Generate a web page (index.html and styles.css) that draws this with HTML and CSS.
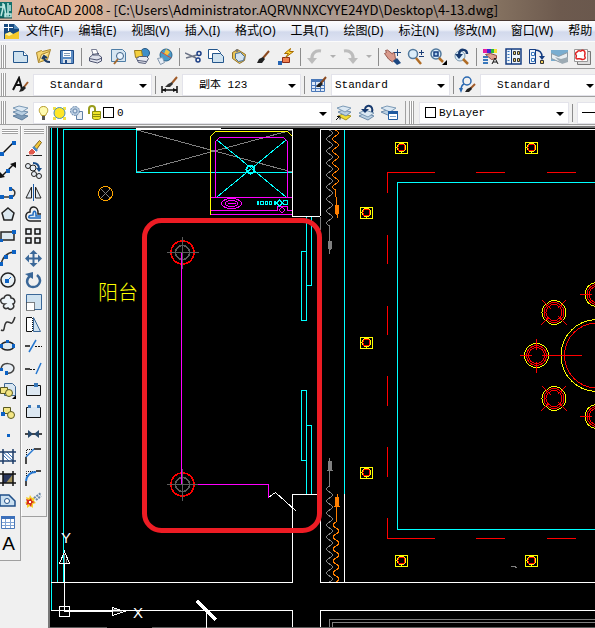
FILE: index.html
```html
<!DOCTYPE html>
<html lang="zh-CN">
<head>
    <meta charset="UTF-8">
    <meta name="viewport" content="width=device-width, initial-scale=1.0">
    <title>AutoCAD 2008</title>
    <link rel="stylesheet" href="styles.css">
</head>
<body>
<header class="titlebar">
    <svg class="app-icon" width="12" height="17" viewBox="0 0 12 17"><path fill="#12706c" d="M0 0h12v16H0z"/><path fill="none" stroke="#bfe8e2" stroke-width="1.500" d="M0 5h3v-4M1 14l3-12 2 12M8 1v13M10 3v6M5 12h6v3H5z"/><path fill="none" stroke="#0a4744" d="M0 16h12"/></svg>
    <h1>AutoCAD 2008 - [C:\Users\Administrator.AQRVNNXCYYE24YD\Desktop\4-13.dwg]</h1>
</header>

<nav class="menubar">
    <svg class="doc-icon" width="16" height="17" viewBox="0 0 16 17"><path fill="#184a80" d="M0 1h10l5 5v10H0z"/><path fill="#4c86b8" d="M10 1l5 5h-5z"/><path fill="#f5c92c" d="M1 11l5-2 3 2 6-3v8H1z"/><path fill="#fff3a0" d="M1 11l5-2 3 2-4 2z"/><path stroke="#fff" d="M4.500 0v8M0 4.500h9"/></svg>
    <button>文件(F)</button>
    <button>编辑(E)</button>
    <button>视图(V)</button>
    <button>插入(I)</button>
    <button>格式(O)</button>
    <button>工具(T)</button>
    <button>绘图(D)</button>
    <button>标注(N)</button>
    <button>修改(M)</button>
    <button>窗口(W)</button>
    <button>帮助</button>
</nav>

<!-- Standard toolbar -->
<div class="toolbar">
    <span class="grip"></span>
    <button class="tool" aria-label="New"><svg viewBox="0 0 17 17"><path fill="#cfe2ef" stroke="#23568c" d="M1.500 3.500h10l4 4v7h-14z"/><path fill="#fff" stroke="#23568c" d="M11.500 3.500v4h4"/></svg></button>
    <button class="tool" aria-label="Open"><svg viewBox="0 0 17 17"><path fill="#f6d66f" stroke="#a8842c" d="M1.500 4.500l5-2 1 1 8-2-3 10-9 3z"/><path fill="#ffeeb0" stroke="#a8842c" d="M3.500 14.500l3-8 8-3"/><path fill="none" stroke="#1d3c66" stroke-width="2" d="M9 9c0 4 2 5 6 5M7 11l2-3 3 2"/></svg></button>
    <button class="tool" aria-label="Save"><svg viewBox="0 0 17 17"><path fill="#5b8cc4" stroke="#1f4b86" d="M2.500 2.500h13v13h-13z"/><path fill="#fff" d="M5 3h8v6H5z"/><path fill="#d8e0e8" d="M5 11h8v4H5z"/><path stroke="#7f98b5" d="M6 5.500h6M6 7.500h6"/><path fill="#1f4b86" d="M7 12h2v3H7z"/></svg></button>
    <span class="sep"></span>
    <button class="tool" aria-label="Plot"><svg viewBox="0 0 17 17"><path fill="#fff" stroke="#7a7f93" d="M4.500 1.500h5l2 6h-5z"/><path fill="#dfe2ec" stroke="#4d5470" d="M2.500 9.500l3-2.500h6l3 2v4l-4 2-8-2z"/><path fill="none" stroke="#4d5470" d="M2 10.500l8 1.500 5-2M5 6.500l7-1"/></svg></button>
    <button class="tool" aria-label="Plot preview"><svg viewBox="0 0 17 17"><path fill="#d6e6f2" stroke="#4f7ea6" d="M1.500 1.500h11l3 3v9h-14z"/><circle cx="10" cy="8" r="3.500" fill="#eaf5ff" stroke="#3d5f85"/><path stroke="#a4692d" stroke-width="2" d="M8 11l-4 5"/></svg></button>
    <button class="tool" aria-label="Publish"><svg viewBox="0 0 17 17"><circle cx="12" cy="5" r="4.500" fill="#3f8fc9" stroke="#28557f"/><path fill="#f4cf3e" stroke="#9a7a18" d="M1.500 2.500h7l1 6-7 1z"/><path fill="#e8eaf2" stroke="#525a77" d="M3.500 10.500l3-2h7l2 2-3 5-7-1z"/><path stroke="#525a77" d="M5 12.500l8 1"/></svg></button>
    <button class="tool" aria-label="Web publish"><svg viewBox="0 0 17 17"><circle cx="10" cy="7" r="6" fill="#4a9ac8" stroke="#2c6690"/><path fill="#f1c644" d="M10 1l4 3-3 4-3-2z"/><path fill="none" stroke="#ce4c38" d="M5 4l10 6"/><path fill="#e6edf5" stroke="#8497ad" d="M1.500 10.500l5-1 2 5-4 2z"/></svg></button>
    <span class="sep"></span>
    <button class="tool" aria-label="Cut"><svg viewBox="0 0 17 17"><path stroke="#6c7486" stroke-width="1.500" d="M0 5l11 5M1 10l11-3"/><circle cx="14" cy="5.500" r="2" fill="none" stroke="#1c3f86" stroke-width="1.500"/><circle cx="13" cy="12" r="2" fill="none" stroke="#1c3f86" stroke-width="1.500"/></svg></button>
    <button class="tool" aria-label="Copy"><svg viewBox="0 0 17 17"><path fill="#fff" stroke="#23568c" d="M.500 1.500h9l3 3v6h-12z"/><path fill="#cfe2ef" stroke="#23568c" d="M4.500 5.500h8l3 3v6h-11z"/></svg></button>
    <button class="tool" aria-label="Paste"><svg viewBox="0 0 17 17"><path fill="#e9c558" stroke="#91702a" d="M1.500 4.500l5-3 8 5-1 6-5 3-7-5z"/><path fill="#d4e4f2" stroke="#476e98" d="M4.500 5.500l5-1 4 4-1 4-5 1-3-3z"/><circle cx="6" cy="2.500" r="1.500" fill="#777"/></svg></button>
    <button class="tool" aria-label="Match properties"><svg viewBox="0 0 17 17"><path stroke="#8b4a20" stroke-width="2" d="M15 3l-6 7"/><path fill="#222" d="M3 15l2-4 4-2 2 2-3 4z"/></svg></button>
    <button class="tool" aria-label="Block editor"><svg viewBox="0 0 17 17"><path fill="#f08050" stroke="#8b2c18" d="M5.500 9.500h7v5h-7z"/><path fill="#ffd83a" stroke="#a86c00" d="M13.500.500l-6 5h4l-3 4 8-6h-4z"/><path fill="#2464b4" d="M1 13h4v4H1z"/></svg></button>
    <span class="sep"></span>
    <button class="tool" aria-label="Undo"><svg viewBox="0 0 17 17"><path fill="none" stroke="#bcbcbc" stroke-width="3" d="M15 3c-6-1-10 3-9 9"/><path fill="#bcbcbc" d="M1 10h10l-5 6z"/></svg></button>
    <button class="drop" aria-label="Undo list"></button>
    <button class="tool" aria-label="Redo"><svg viewBox="0 0 17 17"><path fill="none" stroke="#bcbcbc" stroke-width="3" d="M2 3c6-1 10 3 9 9"/><path fill="#bcbcbc" d="M6 10h10l-5 6z"/></svg></button>
    <button class="drop" aria-label="Redo list"></button>
    <span class="sep"></span>
    <button class="tool" aria-label="Pan"><svg viewBox="0 0 17 17"><path fill="#d99a8c" stroke="#96594e" d="M.500 5.500l2-1-1-2 2-.500 5 4 1-2 1 1 1 6-3 3-4-3z"/><path fill="#1d4780" d="M9 13l4-3 4 5-4 2z"/><path stroke="#1d4780" d="M13.500 1v7M10 4.500h7"/></svg></button>
    <button class="tool" aria-label="Zoom realtime"><svg viewBox="0 0 17 17"><circle cx="6" cy="6" r="4.500" fill="#dceefa" stroke="#52799d" stroke-width="1.500"/><path stroke="#b06c25" stroke-width="2.500" d="M9 10l5 6"/><path stroke="#1d3f78" d="M12 4.500h5M14.500 2v5M12 8.500h5"/></svg></button>
    <button class="tool" aria-label="Zoom window"><svg viewBox="0 0 17 17"><circle cx="6" cy="6" r="5" fill="#dceefa" stroke="#52799d" stroke-width="1.500"/><path fill="#a9cdec" stroke="#143c80" stroke-width="1.500" d="M4 4h4v4H4z"/><path stroke="#b06c25" stroke-width="2.500" d="M9 10l4 4"/><path fill="#000" d="M17 12v5h-5z"/></svg></button>
    <button class="tool" aria-label="Zoom previous"><svg viewBox="0 0 17 17"><circle cx="7" cy="8" r="5" fill="#dceefa" stroke="#7996ad"/><path fill="none" stroke="#16396e" stroke-width="2.500" d="M14 6c0-5-7-6-8 0"/><path fill="#16396e" d="M2 6h8l-4 5z"/><path stroke="#b06c25" stroke-width="2.500" d="M10 11l5 5"/></svg></button>
    <span class="sep"></span>
    <button class="tool" aria-label="Properties"><svg viewBox="0 0 17 17"><path fill="#e81ca0" d="M1 1h4v4H1z"/><path fill="#4028d8" d="M5 1h4v4H5z"/><path fill="#28b83c" d="M9 1h3v4H9z"/><path fill="#f8e030" d="M12 1h3v4h-3z"/><path fill="#e0a090" stroke="#8c4a40" d="M3.500 6.500l5-1 6 2v3l-5 1z"/><path stroke="#3a78bc" stroke-width="2" d="M1 9h5M1 12h5M1 15h5"/><path fill="none" stroke="#111" d="M10 16l3-6 3 6M11 14h4"/></svg></button>
    <button class="tool" aria-label="DesignCenter"><svg viewBox="0 0 17 17"><path fill="#eef4fa" stroke="#143c80" stroke-width="1.500" d="M1 1h15v15H1z"/><path stroke="#143c80" d="M6.500 1v15"/><path fill="#e8c860" stroke="#333" d="M8.500 3.500h2v3h-2zM12.500 3.500h2v3h-2zM8.500 10.500h2v3h-2zM12.500 10.500h2v3h-2z"/><path stroke="#3a78bc" stroke-dasharray="1 2" stroke-width="2" d="M3.500 3v11"/></svg></button>
    <button class="tool" aria-label="Tool palettes"><svg viewBox="0 0 17 17"><path fill="#eef4fa" stroke="#143c80" d="M1.500 1.500h6v14h-6z"/><path fill="#fff" stroke="#3a78bc" d="M3.500 4.500h3v3h-3zM3.500 10.500h3v3h-3z"/><path fill="none" stroke="#143c80" stroke-width="1.500" d="M7 2c5 0 7 2 7 7"/><path fill="#143c80" d="M11 8h6l-3 4z"/><path fill="#f0cc5a" stroke="#333" d="M12.500 12.500h3v3h-3z"/></svg></button>
    <button class="tool" aria-label="Sheet set manager"><svg viewBox="0 0 17 17"><path fill="#79add0" d="M0 2h17v11H0z"/><path fill="#e8eef2" stroke="#8e9ba5" d="M.500 5.500l7 3 9-4v5l-7 5-9-4z"/><path fill="#9dabb4" d="M4 9l6 2 7-2v5l-6 2z"/></svg></button>
    <button class="tool" aria-label="Markup set manager"><svg viewBox="0 0 17 17"><path fill="#ddd" stroke="#777" d="M3.500 3.500h13v13h-13z"/><path fill="#fff" stroke="#999" d="M.500 1.500h13v12h-13z"/><path fill="none" stroke="#e02020" stroke-width="1.500" d="M3 4c2-3 3 0 4-1s4-1 4 2-1 2 0 4-2 3-4 2-5 1-5-1 1-2 0-3 0-3 1-3z"/></svg></button>
</div>

<!-- Styles toolbar -->
<div class="toolbar">
    <span class="grip"></span>
    <label class="tool" for="textStyle"><svg viewBox="0 0 17 17"><path fill="none" stroke="#111" stroke-width="2" d="M1 14l6-12 3 11M3 9h6"/><path stroke="#a05a28" stroke-width="2" d="M16 6l-4 5"/><path fill="#222" d="M7 16l2-4 3-2 2 2-3 3z"/></svg></label>
    <div class="combo indent"><select id="textStyle"><option>Standard</option></select></div>
    <span class="sep"></span>
    <label class="tool" for="dimStyle"><svg viewBox="0 0 17 17"><path stroke="#111" stroke-width="1.500" d="M1 10v7M16 10v7M1 14h15"/><path fill="#111" d="M1 14l4-2v4zM16 14l-4-2v4z"/><path stroke="#a05a28" stroke-width="2" d="M16 1l-5 6"/><path fill="#333" d="M4 11l3-3 4-2 1 2-3 3z"/></svg></label>
    <div class="combo indent"><select id="dimStyle"><option>副本 123</option></select></div>
    <span class="sep"></span>
    <label class="tool" for="tableStyle"><svg viewBox="0 0 17 17"><path fill="#dfeaf8" stroke="#4a78b8" d="M1.500 3.500h13v12h-13z"/><path fill="#4a78b8" d="M1 3h14v3H1z"/><path stroke="#4a78b8" d="M1 9.500h14M1 12.500h14M5.500 4v12M10.500 4v12"/><path stroke="#8b4a20" stroke-width="2" d="M16 1l-5 6"/><path fill="#222" d="M6 11l2-3 3-2 2 2-3 3z"/></svg></label>
    <div class="combo"><select id="tableStyle"><option>Standard</option></select></div>
    <span class="sep"></span>
    <label class="tool" for="leaderStyle"><svg viewBox="0 0 17 17"><circle cx="8" cy="5" r="4" fill="none" stroke="#2a68b0" stroke-width="1.500"/><path fill="none" stroke="#2a68b0" stroke-width="1.500" d="M5 8c-2 1-3 3-3 6"/><path fill="#2a68b0" d="M0 12h4l-2 5z"/><path stroke="#a05a28" stroke-width="2" d="M16 8l-4 4"/><path fill="#222" d="M6 16l2-3 4-2 1 2-3 3z"/></svg></label>
    <div class="combo indent"><select id="leaderStyle"><option>Standard</option></select></div>
</div>

<!-- Layers and properties toolbars -->
<div class="toolbar">
    <span class="grip"></span>
    <button class="tool" aria-label="Layer properties"><svg viewBox="0 0 17 17"><path fill="#7f9cb8" stroke="#5d7d9d" d="M1 12l6-2 9 2-6 4z"/><path fill="#b9cfe2" stroke="#6d8cab" d="M1 8l6-2 9 2-6 4z"/><path fill="#dbe8f3" stroke="#7c9ab6" d="M1 4l6-2 9 2-6 4z"/></svg></button>
    <div class="combo layer-combo">
        <svg width="64" height="16" viewBox="0 0 64 16">
            <path fill="#fffbb0" stroke="#b59a2a" d="M5.500 1.500c5 0 5 5 3 7l-1 2h-4l-1-2c-2-2-2-7 3-7z"/><path stroke="#555" stroke-width="2" d="M4 12h3M4 14h3"/>
            <path fill="#f2e24a" d="M15 2h3v3h-3zM25 2h3v3h-3zM15 12h3v3h-3zM25 12h3v3h-3z"/><circle cx="21.500" cy="8" r="5.500" fill="#ffe628" stroke="#4b8db4"/>
            <path fill="#e8eef4" stroke="#5f7fa5" d="M38.500 6.500h6v8h-6z"/><circle cx="37" cy="6" r="4.500" fill="#b5c9de" stroke="#6787ac" stroke-dasharray="2 1"/><circle cx="37" cy="6" r="2" fill="#dde8f2" stroke="#6787ac"/>
            <path fill="none" stroke="#999c1c" stroke-width="2" d="M51 9V4c0-4 6-4 6 0v2"/><path fill="#f0e428" stroke="#8a8c10" d="M54.500 6.500h8v7l-2 1h-4l-2-1z"/><path stroke="#8a8c10" d="M55 9.500h8M55 11.500h8"/>
        </svg>
        <span class="swatch"></span>
        <select aria-label="Layer"><option>0</option></select>
    </div>
    <button class="tool" aria-label="Make object's layer current"><svg viewBox="0 0 17 17"><path fill="#f2dc34" stroke="#a8941c" d="M3 12l5-2 8 2-5 4z"/><path fill="#b9cfe2" stroke="#6d8cab" d="M3 8l5-2 8 2-5 4z"/><path fill="#dbe8f3" stroke="#7c9ab6" d="M2 4l6-2 8 2-6 4z"/><path fill="none" stroke="#111" d="M1 16l4-4M2 12.500h3v3"/></svg></button>
    <button class="tool" aria-label="Layer previous"><svg viewBox="0 0 17 17"><path fill="#b9cfe2" stroke="#6d8cab" d="M1 12l6-3 9 3-6 4z"/><path fill="#dbe8f3" stroke="#7c9ab6" d="M1 9l6-3 9 3-6 4z"/><path fill="none" stroke="#16396e" stroke-width="2" d="M14 8c2-7-6-8-7-3"/><path fill="#16396e" d="M3 5h8l-4 4z"/></svg></button>
    <button class="tool" aria-label="Layer states"><svg viewBox="0 0 17 17"><path fill="#b9cfe2" stroke="#6d8cab" d="M0 8l6-2 9 2-6 4z"/><path fill="#dbe8f3" stroke="#7c9ab6" d="M0 4l6-2 9 2-6 4z"/><path fill="#fff" stroke="#1f5aa0" d="M7.500 7.500h9v8h-9z"/><path fill="#1f5aa0" d="M7 7h10v3H7z"/><path stroke="#7da3cc" d="M9 12.500h6"/></svg></button>
    <span class="toolbar-end"></span>
    <span class="grip"></span>
    <div class="combo color-combo">
        <span class="swatch"></span>
        <select aria-label="Color"><option>ByLayer</option></select>
    </div>
    <span class="sep"></span>
    <button class="combo line-combo" aria-label="Linetype"><span class="line-sample"></span></button>
</div>

<main class="workspace">
    <!-- Draw -->
    <div class="palette draw">
        <span class="grip"></span>
        <button class="tool" aria-label="Line"><svg viewBox="0 0 17 17"><path stroke="#111" stroke-width="1.500" d="M2 14L13 3"/><path fill="#0c62c4" d="M0 12h4v4H0zM12 1h4v4h-4z"/></svg></button>
        <button class="tool" aria-label="Construction line"><svg viewBox="0 0 17 17"><path stroke="#111" stroke-width="1.500" d="M1 15L15 1"/><path fill="#111" d="M16 0v6l-6-4zM0 16v-6l5 5z"/><path fill="#0c62c4" d="M6 7h4v4H6z"/></svg></button>
        <button class="tool" aria-label="Polyline"><svg viewBox="0 0 17 17"><path fill="none" stroke="#333" stroke-width="1.500" d="M1 13h9c6 0 7-8 0-8"/><path fill="#0c62c4" d="M0 11h4v4H0zM9 11h4v4H9zM9 3h3v4H9z"/></svg></button>
        <button class="tool" aria-label="Polygon"><svg viewBox="0 0 17 17"><path fill="#dce8f0" stroke="#222" stroke-width="1.500" d="M8 2l6 5-2 7H4L2 7z"/></svg></button>
        <button class="tool" aria-label="Rectangle"><svg viewBox="0 0 17 17"><path fill="#dce8f0" stroke="#222" stroke-width="1.500" d="M1 4h13v8H1z"/><path fill="#0c62c4" d="M0 11h3v3H0zM12 2h4v4h-4z"/></svg></button>
        <button class="tool" aria-label="Arc"><svg viewBox="0 0 17 17"><path fill="none" stroke="#333" stroke-width="1.500" d="M1 15C2 8 6 3 14 2"/><path fill="#0c62c4" d="M0 12h3v4H0zM4 5h4v4H4zM12 0h4v4h-4z"/></svg></button>
        <button class="tool" aria-label="Circle"><svg viewBox="0 0 17 17"><circle cx="8" cy="8" r="7" fill="#e8f0f4" stroke="#222" stroke-width="1.500"/><path stroke="#0c62c4" d="M7 9l4-4"/><path fill="#0c62c4" d="M5 7h4v4H5z"/></svg></button>
        <button class="tool" aria-label="Revision cloud"><svg viewBox="0 0 17 17"><path fill="#eef4f8" stroke="#333" stroke-width="1.500" d="M4 4c1-4 7-4 7 0 4 0 5 5 2 6 3 4-3 7-5 4-4 2-6-2-3-4-5 0-6-6-1-6z"/></svg></button>
        <button class="tool" aria-label="Spline"><svg viewBox="0 0 17 17"><path fill="none" stroke="#333" stroke-width="1.500" d="M1 14C6 17 3 7 7 6s4 6 8-5"/></svg></button>
        <button class="tool" aria-label="Ellipse"><svg viewBox="0 0 17 17"><ellipse cx="7.500" cy="8" rx="6.500" ry="4" fill="#dce8f0" stroke="#222" stroke-width="1.500"/><path fill="#0c62c4" d="M0 6h3v4H0zM12 6h3v4h-3zM6 2h3v3H6z"/></svg></button>
        <button class="tool" aria-label="Ellipse arc"><svg viewBox="0 0 17 17"><path fill="#e8eef4" stroke="#444" stroke-width="1.500" d="M1 9C2 1 14 3 14 8c0 4-4 6-8 5"/><path fill="#0c62c4" d="M0 8h3v3H0zM5 11h3v4H5z"/></svg></button>
        <button class="tool" aria-label="Insert block"><svg viewBox="0 0 17 17"><path fill="#d8e6f2" stroke="#3c6694" d="M4.500 1.500h8l3 3v9h-11z"/><path fill="#f4e684" stroke="#5a5a20" d="M.500 5.500h7v6h-7z"/><circle cx="9" cy="11" r="3.500" fill="#f4e684" stroke="#5a5a20"/><path fill="#000" d="M16 13v4h-4z"/></svg></button>
        <button class="tool" aria-label="Make block"><svg viewBox="0 0 17 17"><path fill="#f4e684" stroke="#5a5a20" d="M3.500 3.500h7v6h-7z"/><circle cx="11" cy="11" r="3.500" fill="#f4e684" stroke="#5a5a20"/><path fill="#0c62c4" d="M1 8h4v4H1z"/></svg></button>
        <button class="tool" aria-label="Point"><svg viewBox="0 0 17 17"><path fill="#0c62c4" d="M7 8h3v3H7z"/></svg></button>
        <button class="tool" aria-label="Hatch"><svg viewBox="0 0 17 17"><path fill="#fff" d="M3 4h10v9H3z"/><path stroke="#3c74b8" d="M3 7l6 6M3 4l10 9M7 4l6 6"/><path stroke="#1c3c68" stroke-width="1.500" d="M0 4h16M0 13h16M3 1v15M13 1v15"/></svg></button>
        <button class="tool" aria-label="Gradient"><svg viewBox="0 0 17 17"><path fill="#28365c" d="M3 4h10v9H3z"/><path fill="#a3935c" d="M13 4v9H6z"/><path stroke="#111" stroke-width="1.500" d="M0 4h16M0 13h16M3 1v15M13 1v15"/></svg></button>
        <button class="tool" aria-label="Region"><svg viewBox="0 0 17 17"><path fill="#c9dff0" stroke="#1f4f88" stroke-width="1.500" d="M0 3h9l6 6v5H0z"/><circle cx="7" cy="9" r="2.500" fill="#fff" stroke="#1f4f88"/></svg></button>
        <button class="tool" aria-label="Table"><svg viewBox="0 0 17 17"><path fill="#fff" stroke="#4a78b8" d="M1.500 2.500h13v12h-13z"/><path fill="#3c70ba" d="M1 2h14v3H1z"/><path stroke="#7fa3d4" d="M2 8.500h12M2 11.500h12M5.500 5v9M10.500 5v9"/></svg></button>
        <button class="tool mtext">A</button>
    </div>

    <!-- Modify -->
    <div class="palette modify">
        <span class="grip"></span>
        <button class="tool" aria-label="Erase"><svg viewBox="0 0 17 17"><path stroke="#222" d="M1 15.500h16"/><path fill="#f0c83c" stroke="#80621c" d="M8.500 7.500l6-7 2 2-5 7z"/><path fill="#4a86c0" d="M7 8l2-2 4 4-2 2z"/><path fill="#e0584c" stroke="#fff" d="M3 12l4-4 4 4-3 3H4z"/></svg></button>
        <button class="tool" aria-label="Copy object"><svg viewBox="0 0 17 17"><g fill="#e8eef4" stroke="#222"><circle cx="3" cy="4" r="2.500"/><circle cx="8" cy="6" r="3"/><circle cx="9" cy="12" r="2.500"/><circle cx="14" cy="14" r="2.500"/></g><path fill="none" stroke="#174b88" stroke-width="2" d="M8 1c4 0 6 2 6 6"/><path fill="#174b88" d="M11 6h6l-3 4z"/></svg></button>
        <button class="tool" aria-label="Mirror"><svg viewBox="0 0 17 17"><path fill="#e0e8f0" stroke="#222" d="M6.500 3v11H1zM10.500 3v11H16z"/><path stroke="#1c5ca8" d="M8.500 0v17"/></svg></button>
        <button class="tool" aria-label="Offset"><svg viewBox="0 0 17 17"><path fill="none" stroke="#222" stroke-width="1.500" d="M16 8h-3c1-9-9-9-8-2-6 0-5 9 0 9h11"/><path fill="#dce8f2" stroke="#1d69c0" stroke-width="1.500" d="M16 12H5c-2 0-2-3 3-3 0-5 3-5 3 0v1h5"/></svg></button>
        <button class="tool" aria-label="Array"><svg viewBox="0 0 17 17"><path fill="#e8eef4" stroke="#111" stroke-width="1.500" d="M1 1h5v5H1zM10 1h5v5h-5zM1 10h5v5H1zM10 10h5v5h-5z"/></svg></button>
        <button class="tool" aria-label="Move"><svg viewBox="0 0 17 17"><path stroke="#3a6798" stroke-width="2" d="M8.500 2v13M2 8.500h13"/><path fill="#3a6798" d="M8.500 0l4 4h-8zM8.500 17l4-4h-8zM0 8.500l4-4v8zM17 8.500l-4-4v8z"/></svg></button>
        <button class="tool" aria-label="Rotate"><svg viewBox="0 0 17 17"><path fill="none" stroke="#3a6798" stroke-width="2.500" d="M12 3c6 5 2 12-4 12S0 8 5 4"/><path fill="#3a6798" d="M0 2l8-2v7z"/></svg></button>
        <button class="tool" aria-label="Scale"><svg viewBox="0 0 17 17"><path fill="#cfe2f0" stroke="#3a6798" d="M1.500.500h15v15h-15z"/><path fill="#fff" stroke="#111" stroke-dasharray="1 1" d="M1.500 8.500h8v8h-8z"/></svg></button>
        <button class="tool" aria-label="Stretch"><svg viewBox="0 0 17 17"><path fill="#cfe2f0" stroke="#3a6798" d="M8.500 1.500l7 14h-7z"/><path fill="#fff" stroke="#111" d="M1.500 1.500h6v14h-6z"/><path stroke="#fff" stroke-dasharray="1 1" d="M7.500 1v15"/></svg></button>
        <button class="tool" aria-label="Trim"><svg viewBox="0 0 17 17"><path stroke="#111" stroke-width="1.500" d="M0 8h5"/><path stroke="#111" stroke-dasharray="2 1" d="M10 8.500h7"/><path stroke="#2577d0" stroke-width="1.500" d="M4 14l7-12"/></svg></button>
        <button class="tool" aria-label="Extend"><svg viewBox="0 0 17 17"><path stroke="#111" stroke-width="1.500" d="M0 9h5"/><path stroke="#111" stroke-dasharray="2 1" d="M5 9.500h6"/><path stroke="#2577d0" stroke-width="1.500" d="M11 14l5-11"/></svg></button>
        <button class="tool" aria-label="Break at point"><svg viewBox="0 0 17 17"><path fill="#dde8f2" stroke="#111" d="M1.500 3.500h14v10h-14z"/><path fill="#3a78b8" d="M9 1h4v4H9z"/></svg></button>
        <button class="tool" aria-label="Break"><svg viewBox="0 0 17 17"><path fill="#dde8f2" d="M1 3h15v11H1z"/><path fill="none" stroke="#111" d="M4 3.500H1.500v10h14v-10H13"/><path fill="#3a78b8" d="M3 1h3v3H3zM12 1h3v3h-3z"/></svg></button>
        <button class="tool" aria-label="Join"><svg viewBox="0 0 17 17"><path stroke="#111" stroke-width="1.500" d="M0 8h17"/><path fill="#27496c" d="M3 4l5 4-5 4zM14 4L9 8l5 4z"/></svg></button>
        <button class="tool" aria-label="Chamfer"><svg viewBox="0 0 17 17"><path fill="none" stroke="#111" stroke-dasharray="1 1" d="M1.500 9V1.500H9"/><path fill="none" stroke="#111" stroke-width="1.500" d="M1 16V9M9 1h7"/><path stroke="#2577d0" stroke-width="1.500" d="M1 9l8-8"/></svg></button>
        <button class="tool" aria-label="Fillet"><svg viewBox="0 0 17 17"><path fill="none" stroke="#111" stroke-dasharray="1 1" d="M1.500 10V1.500H10"/><path fill="none" stroke="#111" stroke-width="1.500" d="M1 16v-5M11 1h5"/><path fill="none" stroke="#2577d0" stroke-width="2" d="M1 11C2 5 5 2 11 2"/></svg></button>
        <button class="tool" aria-label="Explode"><svg viewBox="0 0 17 17"><path fill="#f6cf2c" d="M1 5l3 1 1-3 2 3 3-1-1 4 2 2-3 1v4l-3-2-3 2v-4L0 11l2-2z"/><path fill="#d62a1c" d="M1 7l3 1 2-2 1 3 3 1-3 1-1 4-2-3-3 1 1-3z"/><path fill="#fff" d="M4 9h2v2H4z"/><path stroke="#6d89a8" stroke-width="2" stroke-dasharray="2 1" d="M9 6l7-5M11 8l5-4"/></svg></button>
    </div>

    <!-- Drawing area -->
    <section class="canvas">
        <svg class="drawing" aria-label="Model space">
            <defs>
                <symbol id="spot" overflow="visible">
                    <path class="yellow" d="M-6 -5H6V6H-6z"/>
                    <circle class="yellow" r="4.500"/>
                    <circle class="red" r="3.500"/>
                </symbol>
                <g id="chair">
                    <circle class="yellow" r="12"/>
                    <circle class="red" r="10"/>
                    <circle class="red" r="8"/>
                    <path class="red" d="M-17 0H-5M5 0H17M0 -17V-6M0 6V17"/>
                </g>
                <g id="lamp">
                    <circle class="red ring" r="11.500"/>
                    <path class="dim" d="M-16 0H16M0 -16V16"/>
                    <circle class="dim ring" r="7"/>
                </g>
            </defs>

            <g class="plan" transform="translate(-50 -128)">
                <!-- walls -->
                <path class="cyan" d="M51.500 128V610M57.500 128V582M63.500 582V129.500H136.500V172.500H292"/>
                <path class="white" d="M136 128.500H221M136 129.500H292.500V216.500H320M320.500 216V129.500H595"/>
                <path class="gray" d="M320.500 217V230"/>
                <path class="white" d="M51 582.500H292.500V494.500H320.500V582.500H595M344.500 494V582"/>
                <path class="white" d="M51 610.500H292.500V628M320.500 628V610.500H595"/>
                <path class="gray" d="M329.500 628V619.500H595M332.500 628V622.500H595"/>
                <path class="dim" d="M50 627.500H107M152 627.500H595"/>
                <path class="cyan" d="M344.500 130V494"/>

                <!-- sink and stove -->
                <path class="gray" d="M137 130L292 172M137 172L292 130"/>
                <path class="yellow" d="M210.500 215V136.500L215.500 131.500H287.500L292 136"/>
                <path class="magenta" d="M215.500 197V141.500L219.500 137.500H283.500L287.500 141.500V197M211 197.500H292M211 214.500H292M211 210.500H277.500V206.500H287.500V210.500H292M282 207l3 3-3 3-3-3z"/>
                <path class="cyan" d="M217 140L286 197M286 140L217 197"/>
                <circle class="cyan heavy" cx="250.500" cy="169.500" r="4"/>
                <ellipse class="magenta" cx="231.500" cy="203.500" rx="10" ry="5"/>
                <ellipse class="magenta" cx="231.500" cy="203.500" rx="6" ry="3"/>
                <path class="magenta" d="M228 203.500H236"/>
                <path class="cyan" d="M257.500 201v4M258.500 201v4M260.500 201.500h3v3h-3zM265.500 201.500h2v3h-2zM269.500 201.500h2v3h-2zM274.500 201v4M275.500 201v4M279.500 200l3 3-3 3-3-3z"/>
                <circle class="cyan" cx="285.500" cy="202.500" r="2.500"/>

                <!-- sliding doors -->
                <path class="cyan" d="M306.500 217V320.500H301.500V251.500H306M311.500 217V285.500H306"/>
                <path class="cyan" d="M306.500 494V390.500H301.500V460.500H306M306 425.500H311.500V494"/>

                <!-- curtains -->
                <path class="gray" d="M329.500 130q6 3 0 6t0 6t0 6t0 6t0 6t0 6t0 6t0 6t0 6t0 6t0 6t0 6t0 6t0 6t0 6t0 6V254"/>
                <path class="gray fill" d="M328 241h4l-1 8h-2z"/>
                <path class="orange" d="M335.500 130q6 3 0 6t0 6t0 6t0 6t0 6t0 6t0 6t0 6t0 6t0 6L337.500 218"/>
                <path class="orange fill" d="M335 205h4l-1 9h-2z"/>
                <path class="gray" d="M329.500 582q6 -3 0 -6t0 -6t0 -6t0 -6t0 -6t0 -6t0 -6t0 -6t0 -6t0 -6t0 -6t0 -6t0 -6t0 -6t0 -6t0 -6V458"/>
                <path class="gray fill" d="M328 470h4l-1 -9h-2z"/>
                <path class="orange" d="M336 582q6 -3 0 -6t0 -6t0 -6t0 -6t0 -6t0 -6t0 -6t0 -6t0 -6t0 -6L337.500 494"/>
                <path class="orange fill" d="M335 506h4l-1 -9h-2z"/>

                <!-- balcony -->
                <circle class="amber" cx="105.500" cy="193.500" r="7"/>
                <path class="gray" d="M101 189L110 198M110 189L101 198"/>
                <text class="room" x="98" y="300">阳台</text>
                <use href="#lamp" x="182.500" y="252.500"/>
                <use href="#lamp" x="182.500" y="484.500"/>
                <path class="magenta" d="M181.500 253V484M198 484.500H268.500V498"/>
                <path class="white" d="M269 497L275.500 492.500L296 511"/>
                <rect class="marker" x="144.500" y="220.500" width="175" height="310" rx="17"/>

                <!-- dining room -->
                <path class="red" d="M387.500 193V172.500H435M476 172.500H505M547 172.500H576M387.500 235V264M387.500 306V335M387.500 376V406M387.500 447V477M387.500 518V538.500H435M476 538.500H505M547 538.500H576"/>
                <path class="cyan" d="M595 182.500H397.500V529.500H595"/>
                <use href="#spot" x="401.500" y="147.500"/>
                <use href="#spot" x="531.500" y="147.500"/>
                <use href="#spot" x="366.500" y="212.500"/>
                <use href="#spot" x="366.500" y="342.500"/>
                <use href="#spot" x="366.500" y="472.500"/>
                <use href="#spot" x="401.500" y="560.500"/>
                <use href="#spot" x="531.500" y="560.500"/>
                <circle class="yellow" cx="597" cy="355.500" r="36"/>
                <circle class="red" cx="597" cy="355.500" r="32.500"/>
                <path class="red" d="M553 355.500H582"/>
                <use href="#chair" x="536.500" y="355.500"/>
                <use href="#chair" transform="translate(554 312.500) rotate(45)"/>
                <use href="#chair" transform="translate(554 398.500) rotate(45)"/>
                <use href="#chair" x="597" y="294.500"/>
                <use href="#chair" x="597" y="416.500"/>
                <path class="gray" d="M511 566h3l3 2"/>

                <!-- door leaf and UCS icon -->
                <path class="white" d="M206.500 611V628"/>
                <path class="white leaf" d="M197 601L216 620"/>
                <path class="white" d="M59.500 606.500h10v10h-10zM64.500 563V611M59.500 563.500h10l-5-12zM112.500 607.500v8l12-4z"/>
                <path class="gray" d="M64.500 554V563M66.500 559V563M113 611.500H122M113 609.500H117"/>
                <path class="white heavy" d="M64 611H112"/>
                <text class="axis" x="133" y="618">X</text>
                <text class="axis" x="61" y="543">Y</text>
            </g>
        </svg>
    </section>
</main>
</body>
</html>
```

FILE: styles.css
```css
* {
    box-sizing: border-box;
    margin: 0;
    padding: 0;
}

body {
    display: flex;
    flex-direction: column;
    min-height: 100vh;
    overflow: hidden;
    background: #f0f0f0;
    color: #000;
    font-family: "Noto Sans", "Noto Sans CJK SC", sans-serif;
    font-size: 12px;
}

button,
select {
    border: none;
    border-radius: 0;
    background: none;
    color: inherit;
    font: inherit;
}

svg {
    display: block;
    flex: none;
}

/* Title bar */
.titlebar {
    display: flex;
    align-items: center;
    gap: 6px;
    height: 21px;
    border-bottom: 1px solid #4a3a34;
    background: linear-gradient(90deg, #d8b8a4 0, #e2b696 90px, #c2aca0 120px, #b3a298 250px, #a39084 440px, #83705f 500px, #6d5a4e 560px, #6a584d 100%);
    white-space: nowrap;
    overflow: hidden;
}

.titlebar h1 {
    font-family: "Noto Sans CJK SC", sans-serif;
    font-size: 13px;
    font-weight: 400;
    line-height: 20px;
}

/* Menu */
.menubar {
    display: flex;
    align-items: center;
    height: 21px;
    padding-left: 4px;
    border-bottom: 1px solid #fbfbfb;
    background: linear-gradient(#fdfdfe 0, #eceff7 45%, #d2d9ec 55%, #dde2f2 100%);
    overflow: hidden;
}

.menubar button {
    flex: none;
    margin-left: 15px;
    line-height: 18px;
    white-space: nowrap;
}

.menubar .doc-icon + button {
    margin-left: 6px;
}

/* Toolbars */
.toolbar {
    display: flex;
    flex: none;
    align-items: center;
    height: 27px;
    margin-bottom: 1px;
    padding-top: 3px;
    border-bottom: 1px solid #a0a0a0;
    background: #f0f0f0;
    overflow: hidden;
}

.toolbar .grip {
    flex: none;
    align-self: stretch;
    width: 5px;
    margin: 0 3px 0 1px;
    border: 1px solid #a0a0a0;
    border-width: 0 1px;
    background: linear-gradient(90deg, #fff 1px, #a0a0a0 1px, #a0a0a0 2px, #fff 2px);
}

.tool {
    display: flex;
    flex: none;
    align-items: center;
    justify-content: center;
    width: 23px;
    height: 22px;
}

.tool svg {
    width: 17px;
    height: 17px;
}

.drop {
    display: flex;
    flex: none;
    justify-content: center;
    width: 13px;
}

.drop::after {
    content: "";
    border: 3px solid transparent;
    border-top-color: #b0b0b0;
    border-bottom: none;
}

.sep {
    flex: none;
    width: 1px;
    height: 18px;
    margin: 0 2px 0 3px;
    background: #8c8c8c;
}

.combo {
    display: flex;
    flex: none;
    align-items: center;
    width: 119px;
    height: 22px;
    margin-left: 1px;
    border: 1px solid #e3e3ea;
    background: #fff;
}

.combo select {
    flex: 1;
    min-width: 0;
    height: 20px;
    padding-left: 3px;
    appearance: none;
    outline: none;
    font-family: "Liberation Mono", "Noto Sans CJK SC", monospace;
    font-size: 11px;
}

.combo.indent select {
    padding-left: 16px;
}

.combo:not(.line-combo)::after {
    content: "";
    margin: 2px 4px 0 -11px;
    border: 4px solid transparent;
    border-top-color: #000;
    border-bottom: none;
    pointer-events: none;
}

.layer-combo {
    width: 299px;
    padding-left: 4px;
}

.color-combo {
    width: 150px;
    margin-left: 2px;
    padding-left: 4px;
}

.line-combo {
    width: 120px;
    margin-left: 2px;
    padding-left: 4px;
}

.line-sample {
    flex: 1;
    height: 1px;
    background: #000;
}

.swatch {
    flex: none;
    width: 11px;
    height: 11px;
    margin-left: 1px;
    border: 1px solid #000;
}

.toolbar-end {
    flex: none;
    align-self: stretch;
    width: 5px;
    margin-right: 2px;
    border-right: 1px solid #a0a0a0;
}

/* Side palettes */
.workspace {
    display: flex;
    flex: 1;
    align-items: flex-start;
    min-height: 0;
}

.palette {
    display: flex;
    flex: none;
    flex-direction: column;
    padding-bottom: 5px;
    border-right: 1px solid #a0a0a0;
    border-bottom: 1px solid #a0a0a0;
}

.palette .grip {
    height: 5px;
    margin: 3px 2px;
    border: 1px solid #a0a0a0;
    border-width: 1px 0;
    background: linear-gradient(#fff 1px, #a0a0a0 1px, #a0a0a0 2px, #fff 2px);
}

.draw {
    width: 21px;
}

.draw .tool {
    width: 17px;
}

.modify {
    width: 26px;
    margin-right: 1px;
    border-left: 1px solid #fff;
}

.draw .mtext {
    font-family: "Liberation Sans", sans-serif;
    font-size: 19px;
}

/* Drawing */
.canvas {
    flex: 1;
    align-self: stretch;
    min-width: 0;
    border-top: 2px solid #777;
    border-left: 2px solid #777;
    background: #000;
    overflow: hidden;
}

.drawing {
    width: 100%;
    height: 100%;
}

.drawing path,
.drawing circle,
.drawing ellipse {
    fill: none;
    shape-rendering: crispEdges;
}

.drawing .cyan { stroke: #00ffff; }
.drawing .white { stroke: #fff; }
.drawing .gray { stroke: #808080; }
.drawing .dim { stroke: #5c5c5c; }
.drawing .yellow { stroke: #ffff00; }
.drawing .magenta { stroke: #ff00ff; }
.drawing .red { stroke: #ff0000; }
.drawing .orange { stroke: #ff7f00; }
.drawing .amber { stroke: #ffa500; }

.drawing .gray.fill { fill: #808080; }
.drawing .orange.fill { fill: #ff7f00; }

.drawing .ring { stroke-width: 1.5; }
.drawing .heavy { stroke-width: 2; }
.drawing .leaf { stroke-width: 4; }

.drawing .marker {
    fill: none;
    stroke: #ed1c24;
    stroke-width: 5;
}

.drawing .room {
    fill: #ffff00;
    font-family: "Noto Sans CJK SC", sans-serif;
    font-size: 20px;
    font-weight: 300;
}

.drawing .axis {
    fill: #fff;
    font-family: "Liberation Sans", sans-serif;
    font-size: 15px;
}
```
